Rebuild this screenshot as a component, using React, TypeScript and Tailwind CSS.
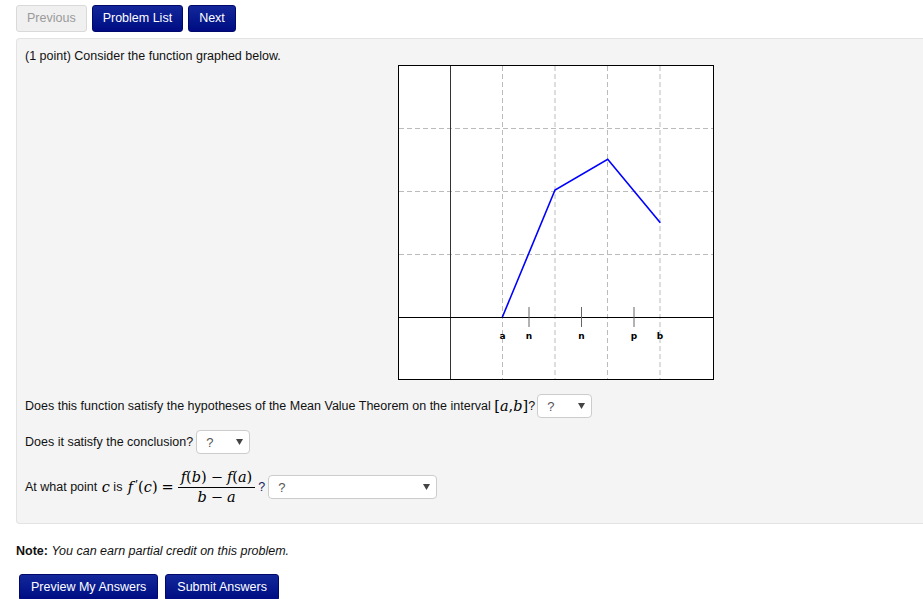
import React from "react";

function Sel({ w }: { w: number }) {
  return (
    <div
      className="inline-flex h-[24px] items-center justify-between rounded-[4px] border border-[#cccccc] bg-white pl-[9px] pr-[6px]"
      style={{ width: w }}
    >
      <span className="text-[13px] text-[#555]">?</span>
      <svg width="7" height="6" viewBox="0 0 7 6">
        <polygon points="0,0 7,0 3.5,6" fill="#444" />
      </svg>
    </div>
  );
}

function Graph() {
  const vx = [104.5, 157, 209.5, 262];
  const hy = [63.5, 126.5, 189.5];
  return (
    <svg width="316" height="315" viewBox="0 0 316 315" className="block bg-white">
      {vx.map((x) => (
        <line key={x} x1={x} y1={1} x2={x} y2={314} stroke="#bbbbbb" strokeWidth="1" strokeDasharray="5 3" />
      ))}
      {hy.map((y) => (
        <line key={y} x1={1} y1={y} x2={315} y2={y} stroke="#bbbbbb" strokeWidth="1" strokeDasharray="5 3" />
      ))}
      <line x1={52.5} y1={1} x2={52.5} y2={314} stroke="#333" strokeWidth="1" />
      <line x1={1} y1={252.5} x2={315} y2={252.5} stroke="#000" strokeWidth="1" />
      {[131, 183.5, 236].map((x) => (
        <line key={x} x1={x} y1={242} x2={x} y2={262} stroke="#666" strokeWidth="1" />
      ))}
      <polyline
        points="104.3,252.3 157,125 209.7,94.3 262.3,157.7"
        fill="none"
        stroke="#0000ff"
        strokeWidth="1.6"
      />
      {[
        [104.5, "a"],
        [131, "n"],
        [183.5, "n"],
        [236, "p"],
        [262, "b"],
      ].map(([x, t]) => (
        <text
          key={String(x)}
          x={x as number}
          y={274}
          textAnchor="middle"
          fontSize="9"
          fontWeight="bold"
          fontFamily="'DejaVu Sans', sans-serif"
          fill="#000"
        >
          {t}
        </text>
      ))}
      <rect x={0.5} y={0.5} width={315} height={314} fill="none" stroke="#000" strokeWidth="1" />
    </svg>
  );
}

const mathCls = "font-['DejaVu_Serif',serif] text-[14.5px] text-black";

export default function App() {
  return (
    <div className="h-[599px] w-[923px] overflow-hidden bg-white font-['Liberation_Sans',Arial,sans-serif] text-[12.5px] leading-[17px] text-[#111]">
      <div className="flex gap-[5px] pl-4 pt-[5px]">
        <button className="h-[27px] rounded-[3px] border border-[#d9d9d9] bg-[#f0f0f0] px-[10px] text-[#9a9a9a]">
          Previous
        </button>
        <button className="h-[27px] rounded-[3px] border border-[#00086a] bg-linear-to-b from-[#13269a] to-[#000a82] px-[10px] text-white">
          Problem List
        </button>
        <button className="h-[27px] rounded-[3px] border border-[#00086a] bg-linear-to-b from-[#13269a] to-[#000a82] px-[10px] text-white">
          Next
        </button>
      </div>

      <div className="ml-4 mt-[6px] h-[486px] rounded-l-[4px] border border-r-0 border-[#e3e3e3] bg-[#f4f4f4] pl-[8px] pt-[9px]">
        <div>(1 point) Consider the function graphed below.</div>
        <div className="ml-[373px]">
          <Graph />
        </div>

        <div className="mt-[14px] flex h-[24px] items-center">
          <span>Does this function satisfy the hypotheses of the Mean Value Theorem on the interval&nbsp;</span>
          <span className={mathCls}>
            [<i>a</i>,<i>b</i>]
          </span>
          <span className="mr-[2px]">?</span>
          <Sel w={55} />
        </div>

        <div className="mt-[12px] flex h-[24px] items-center">
          <span className="mr-[3px]">Does it satisfy the conclusion?</span>
          <Sel w={54} />
        </div>

        <div className="mt-[11px] flex h-[44px] items-center">
          <span>At what point&nbsp;</span>
          <span className={`${mathCls} ml-[1px]`}>
            <i>c</i>
          </span>
          <span>&nbsp;is&nbsp;</span>
          <span className={`${mathCls} ml-[2px] inline-flex items-center`}>
            <i>f</i>
            <span className="relative -top-[4px] ml-[2px] font-['Liberation_Serif',serif] text-[13px]">&prime;</span>
            <span>(<i>c</i>)</span>
            <span className="mx-[4px]">=</span>
          </span>
          <span className={`inline-flex flex-col items-center ${mathCls} leading-[19px]`}>
            <span className="inline-flex items-center px-[3px]">
              <i>f</i>(<i>b</i>)<span className="mx-[4px]">&minus;</span><i>f</i>(<i>a</i>)
            </span>
            <span className="h-px w-full bg-black" />
            <span className="inline-flex items-center">
              <i>b</i><span className="mx-[4px]">&minus;</span><i>a</i>
            </span>
          </span>
          <span className="ml-[3px] mr-[3px] text-[#1a1a60]">?</span>
          <Sel w={169} />
        </div>
      </div>

      <div className="ml-4 mt-[19px]">
        <b>Note:</b> <i>You can earn partial credit on this problem.</i>
      </div>

      <div className="ml-[19px] mt-[14px] flex gap-[7px]">
        <button className="h-[27px] rounded-[3px] border border-[#00086a] bg-linear-to-b from-[#13269a] to-[#000a82] px-[11px] text-white">
          Preview My Answers
        </button>
        <button className="h-[27px] rounded-[3px] border border-[#00086a] bg-linear-to-b from-[#13269a] to-[#000a82] px-[11px] text-white">
          Submit Answers
        </button>
      </div>
    </div>
  );
}
